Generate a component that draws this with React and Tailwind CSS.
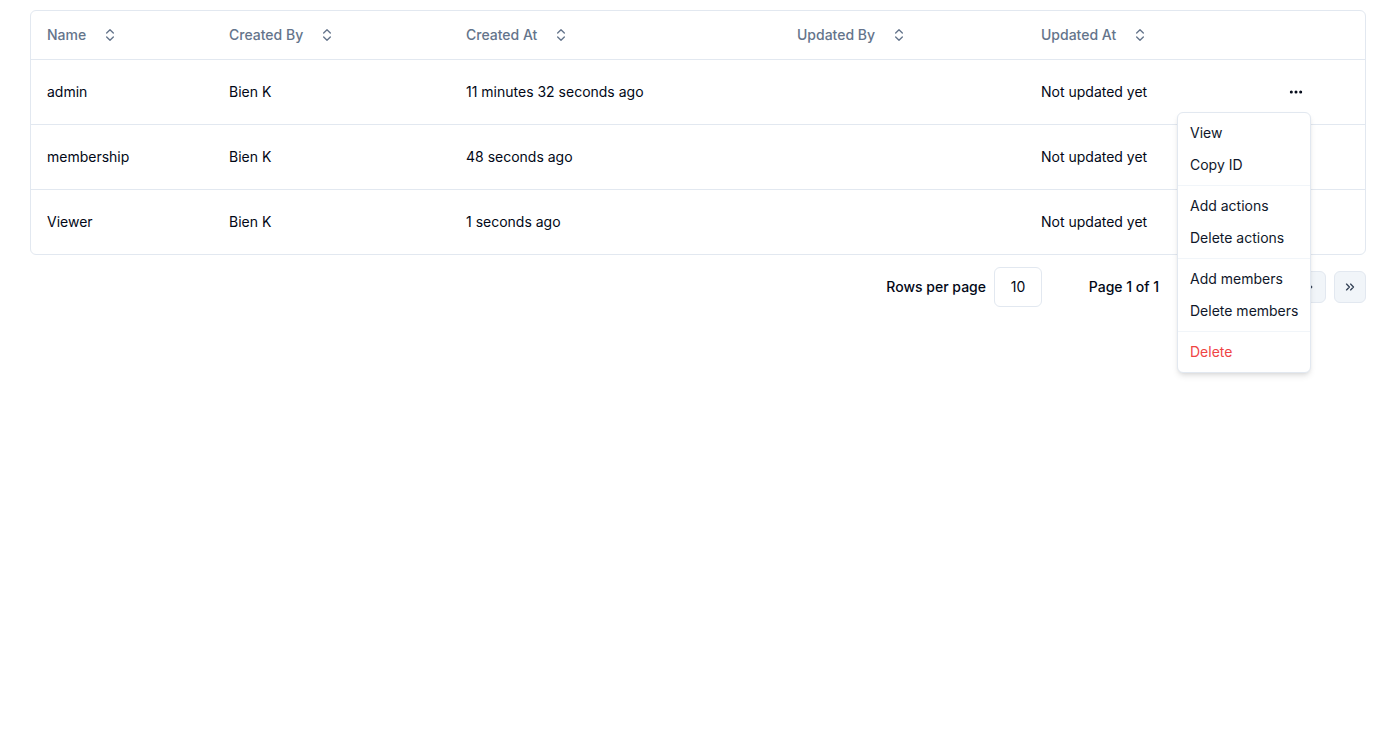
import React from "react";
import { ChevronsUpDown, MoreHorizontal, ChevronsLeft, ChevronLeft, ChevronRight, ChevronsRight } from "lucide-react";

const cols = "grid grid-cols-[182px_237px_331px_244px_239px_1fr]";

const rows = [
  ["admin", "Bien K", "11 minutes 32 seconds ago", "", "Not updated yet"],
  ["membership", "Bien K", "48 seconds ago", "", "Not updated yet"],
  ["Viewer", "Bien K", "1 seconds ago", "", "Not updated yet"],
];

const headers = ["Name", "Created By", "Created At", "Updated By", "Updated At"];

function Item({ children, red }) {
  return (
    <div className={`h-8 flex items-center px-2 rounded-sm text-sm whitespace-nowrap ${red ? "text-[#ef4444]" : "text-[#0f172a]"}`}>
      {children}
    </div>
  );
}

function Sep() {
  return <div className="-mx-1 my-1 h-px bg-[#f1f5f9]" />;
}

export default function App() {
  return (
    <div className="min-h-screen bg-white text-[#020817]" style={{ fontFamily: "Inter, 'Noto Sans', sans-serif" }}>
      <div className="pt-[10px] pl-[30px] w-[1366px]">
        <div className="relative">
          <div className="border border-[#e2e8f0] rounded-md">
            <div className={`${cols} h-[49px] border-b border-[#e2e8f0] items-center`}>
              {headers.map((h) => (
                <div key={h} className="pl-4 flex items-center text-sm font-medium text-[#64748b]">
                  <span>{h}</span>
                  <ChevronsUpDown size={16} strokeWidth={2} className="ml-[16px] text-[#64748b]" />
                </div>
              ))}
              <div />
            </div>
            {rows.map((r, i) => (
              <div key={i} className={`${cols} items-center ${i < rows.length - 1 ? "h-[65px] border-b border-[#e2e8f0]" : "h-[64px] pb-[1px]"}`}>
                {r.map((c, j) => (
                  <div key={j} className="pl-4 text-sm text-[#020817]">{c}</div>
                ))}
                <div className="pl-4">
                  {i === 0 && (
                    <div className="w-8 h-8 flex items-center justify-center">
                      <MoreHorizontal size={16} strokeWidth={2.5} className="text-[#020817]" />
                    </div>
                  )}
                </div>
              </div>
            ))}
          </div>

          <div className="flex items-center justify-end mt-3">
            <div className="flex items-center gap-2">
              <span className="text-sm font-medium">Rows per page</span>
              <div className="w-12 h-10 border border-[#e2e8f0] rounded-md flex items-center justify-center text-sm">10</div>
            </div>
            <div className="w-[100px] ml-[32px] text-center text-sm font-medium">Page 1 of 1</div>
            <div className="flex items-center gap-2 ml-[40px]">
              {[ChevronsLeft, ChevronLeft, ChevronRight, ChevronsRight].map((I, k) => (
                <div key={k} className="w-8 h-8 rounded-md border border-[#e2e8f0] bg-[#f1f5f9] flex items-center justify-center">
                  <I size={14} strokeWidth={2.25} className="text-[#334155]" />
                </div>
              ))}
            </div>
          </div>

          <div className="absolute left-[1147px] top-[102px] bg-white border border-[#e2e8f0] rounded-md shadow-md p-1">
            <Item>View</Item>
            <Item>Copy ID</Item>
            <Sep />
            <Item>Add actions</Item>
            <Item>Delete actions</Item>
            <Sep />
            <Item>Add members</Item>
            <Item>Delete members</Item>
            <Sep />
            <Item red>Delete</Item>
          </div>
        </div>
      </div>
    </div>
  );
}
